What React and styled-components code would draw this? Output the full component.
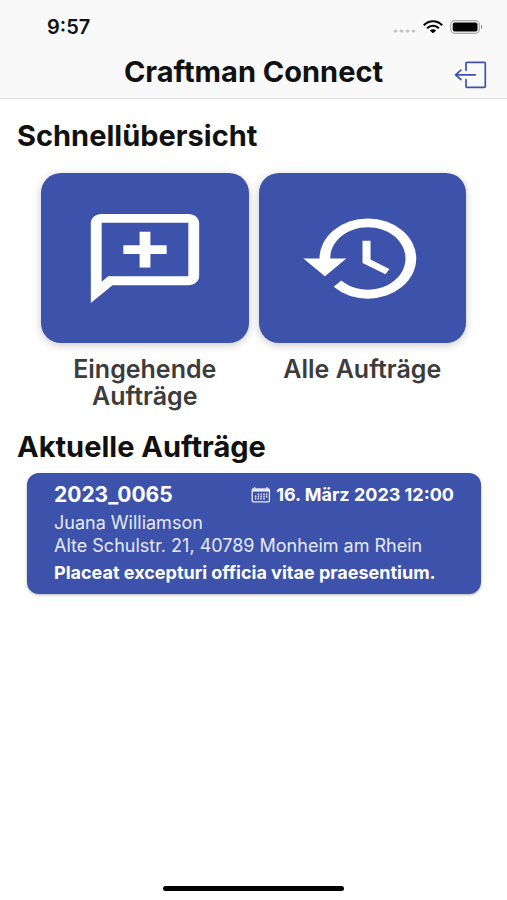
import React from 'react';
import styled, { createGlobalStyle } from 'styled-components';

const GlobalStyle = createGlobalStyle`
  *, *::before, *::after { box-sizing: border-box; }
  body {
    margin: 0;
    background: #fff;
    color: #111;
    font-family: Inter, "Liberation Sans", sans-serif;
  }
  button { font: inherit; }
`;

const Screen = styled.div`
  display: flex;
  flex-direction: column;
  min-height: 100vh;
`;

const Header = styled.header`
  background: #f9f9f9;
  border-bottom: 1px solid #dedede;
`;

const StatusBar = styled.div`
  display: flex;
  align-items: center;
  justify-content: space-between;
  height: 54px;
  padding: 0 24px 0 47px;
`;

const Time = styled.time`
  font-size: 20px;
  line-height: 24px;
  font-weight: 600;
`;

const StatusIcons = styled.div`
  display: flex;
  align-items: center;
  gap: 7px;
`;

const TitleBar = styled.div`
  display: grid;
  grid-template-columns: 1fr auto 1fr;
  align-items: center;
  height: 44px;
  padding: 0 20px 8px;
`;

const Title = styled.h1`
  grid-column: 2;
  margin: 0;
  font-size: 29px;
  line-height: 36px;
  font-weight: 700;
`;

const LogoutButton = styled.button`
  justify-self: end;
  display: flex;
  padding: 5px 0 0;
  border: 0;
  background: none;
  color: #3d53ab;
  cursor: pointer;
`;

const Main = styled.main`
  flex: 1;
  padding: 20px 17px;
`;

const SectionTitle = styled.h2`
  margin: 0;
  font-size: 29px;
  line-height: 34px;
  font-weight: 700;
`;

const Tiles = styled.div`
  display: grid;
  grid-template-columns: 1fr 1fr;
  gap: 10px;
  padding: 20px 24px;
`;

const Tile = styled.button`
  display: flex;
  flex-direction: column;
  gap: 13px;
  padding: 0;
  border: 0;
  background: none;
  color: #3c3c3c;
  cursor: pointer;
`;

const TileFace = styled.span`
  display: flex;
  align-items: center;
  justify-content: center;
  width: 100%;
  height: 170px;
  border-radius: 20px;
  background: #3d53ab;
  color: #fff;
  box-shadow: 0 2px 8px rgba(0, 0, 0, 0.22);
`;

const TileLabel = styled.span`
  width: 100%;
  padding: 0 20px;
  font-size: 25px;
  line-height: 27px;
  font-weight: 600;
  text-align: center;
`;

const OrderCard = styled.article`
  display: flex;
  flex-direction: column;
  margin: 9px 9px 0 10px;
  padding: 10px 27px;
  border-radius: 12px;
  background: #3d53ab;
  color: #fff;
  box-shadow: 0 1px 3px rgba(0, 0, 0, 0.3);
`;

const OrderHead = styled.div`
  display: flex;
  align-items: center;
  justify-content: space-between;
  margin-bottom: 4px;
  white-space: nowrap;
`;

const OrderNumber = styled.h3`
  margin: 0;
  font-size: 21px;
  line-height: 24px;
  font-weight: 700;
`;

const OrderDate = styled.div`
  display: flex;
  align-items: center;
  gap: 5px;
  font-size: 18px;
  line-height: 24px;
  font-weight: 700;
`;

const OrderLine = styled.p`
  margin: 0;
  font-size: 18px;
  line-height: 23px;
  color: #e6e9f6;
`;

const OrderNote = styled.p`
  margin: 0;
  padding-top: 4px;
  font-size: 18px;
  line-height: 23px;
  font-weight: 700;
`;

const Footer = styled.footer`
  display: flex;
  justify-content: center;
  padding: 9px;
`;

const HomeIndicator = styled.div`
  width: 37%;
  height: 5px;
  border-radius: 3px;
  background: #000;
`;

const SignalIcon = () => (
  <svg width="23" height="14" viewBox="0 0 23 14" fill="#c4c4c4" aria-hidden="true">
    <ellipse cx="2.5" cy="11" rx="2" ry="1.6" />
    <ellipse cx="8.5" cy="11" rx="2" ry="1.6" />
    <ellipse cx="14.5" cy="11" rx="2" ry="1.6" />
    <ellipse cx="20.5" cy="11" rx="2" ry="1.6" />
  </svg>
);

const WifiIcon = () => (
  <svg width="20" height="14" viewBox="0 0 20 14" fill="none" stroke="#000" strokeWidth="2.2" aria-hidden="true">
    <path d="M.8 5.2C6-.1 14-.1 19.2 5.2M4.1 8.2c3.4-3.3 8.4-3.3 11.8 0" />
    <path d="M6.8 10.5c1.9-1.6 4.5-1.6 6.4 0L10 13.3z" fill="#000" stroke="none" />
  </svg>
);

const BatteryIcon = () => (
  <svg width="33" height="14" viewBox="0 0 33 14" aria-hidden="true">
    <rect x=".7" y=".7" width="28.6" height="12.6" rx="4" fill="none" stroke="#a8a8a8" strokeWidth="1.2" />
    <rect x="2.7" y="2.5" width="24.8" height="9" rx="2" fill="#000" />
    <path d="M31 4.8c1.7.6 1.7 3.8 0 4.4z" fill="#8c8c8c" />
  </svg>
);

const LogoutIcon = () => (
  <svg width="33" height="28" viewBox="0 0 33 28" fill="none" stroke="currentColor" strokeWidth="1.7" strokeLinecap="round" strokeLinejoin="round" aria-hidden="true">
    <path d="M12 9.2V2.4q0-1 1-1h17.3q1 0 1 1v22.9q0 1-1 1H13q-1 0-1-1v-6.8M21.3 13.8H1.5M6.9 9.1l-5.4 4.7 5.4 4.7" />
  </svg>
);

const MessagePlusIcon = () => (
  <svg width="130" height="107" viewBox="0 0 24 24" preserveAspectRatio="none" fill="currentColor" aria-hidden="true">
    <path d="M20 2H4c-1.1 0-2 .9-2 2v18l4-4h14c1.1 0 2-.9 2-2V4c0-1.1-.9-2-2-2zm0 14H5.2L4 17.2V4h16v12zM11 6h2v3h3v2h-3v3h-2v-3H8V9h3z" />
  </svg>
);

const HistoryIcon = () => (
  <svg width="129" height="107" viewBox="0 0 24 24" preserveAspectRatio="none" fill="currentColor" aria-hidden="true">
    <path d="M13 3a9 9 0 0 0-9 9H1l3.89 3.89.07.14L9 12H6c0-3.87 3.13-7 7-7s7 3.13 7 7-3.13 7-7 7c-1.93 0-3.68-.79-4.94-2.06l-1.42 1.42A8.954 8.954 0 0 0 13 21a9 9 0 0 0 0-18zm-1 5v5l4.28 2.54.72-1.21-3.5-2.08V8z" />
  </svg>
);

const CalendarIcon = () => (
  <svg width="20" height="16" viewBox="0 0 20 16" fill="none" stroke="#e6e9f6" aria-hidden="true">
    <rect x="1.2" y="2.2" width="17.2" height="12.6" rx="1" strokeWidth="1.3" />
    <path d="M1 1.6h17.6v3H1z" fill="#e6e9f6" stroke="none" />
    <path d="M3.6.2v2.6M16 .2v2.6" strokeWidth="1.5" />
    <path d="M7.4 6.4v6.2M10.2 6.4v6.2M4.6 8.6v4M13 6.4v6.2M15.6 6.4v4" strokeWidth="1.4" strokeDasharray="1.8 .5" />
  </svg>
);

const tiles = [
  { label: 'Eingehende Aufträge', Icon: MessagePlusIcon },
  { label: 'Alle Aufträge', Icon: HistoryIcon },
];

const orders = [
  {
    number: '2023_0065',
    date: '16. März 2023 12:00',
    dateTime: '2023-03-16T12:00',
    customer: 'Juana Williamson',
    address: 'Alte Schulstr. 21, 40789 Monheim am Rhein',
    note: 'Placeat excepturi officia vitae praesentium.',
  },
];

export default function App() {
  return (
    <>
      <GlobalStyle />
      <Screen>
        <Header>
          <StatusBar>
            <Time>9:57</Time>
            <StatusIcons>
              <SignalIcon />
              <WifiIcon />
              <BatteryIcon />
            </StatusIcons>
          </StatusBar>
          <TitleBar>
            <Title>Craftman Connect</Title>
            <LogoutButton type="button" aria-label="Abmelden">
              <LogoutIcon />
            </LogoutButton>
          </TitleBar>
        </Header>
        <Main>
          <SectionTitle>Schnellübersicht</SectionTitle>
          <Tiles>
            {tiles.map(({ label, Icon }) => (
              <Tile key={label} type="button">
                <TileFace>
                  <Icon />
                </TileFace>
                <TileLabel>{label}</TileLabel>
              </Tile>
            ))}
          </Tiles>
          <SectionTitle>Aktuelle Aufträge</SectionTitle>
          {orders.map((order) => (
            <OrderCard key={order.number}>
              <OrderHead>
                <OrderNumber>{order.number}</OrderNumber>
                <OrderDate>
                  <CalendarIcon />
                  <time dateTime={order.dateTime}>{order.date}</time>
                </OrderDate>
              </OrderHead>
              <OrderLine>{order.customer}</OrderLine>
              <OrderLine>{order.address}</OrderLine>
              <OrderNote>{order.note}</OrderNote>
            </OrderCard>
          ))}
        </Main>
        <Footer>
          <HomeIndicator />
        </Footer>
      </Screen>
    </>
  );
}
